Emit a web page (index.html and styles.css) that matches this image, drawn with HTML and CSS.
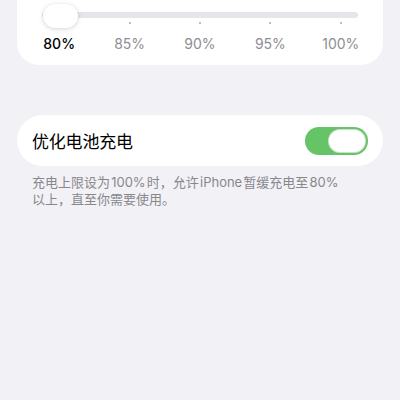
FILE: index.html
```html
<!DOCTYPE html>
<html lang="zh-CN">
<head>
  <meta charset="UTF-8">
  <meta name="viewport" content="width=device-width, initial-scale=1.0">
  <title>电池充电</title>
  <link rel="stylesheet" href="styles.css">
</head>
<body>
  <div class="page">
    <section class="card limit-card">
      <div class="slider">
        <div class="track"></div>
        <div class="thumb"></div>
      </div>
      <div class="stops">
        <div class="stop active"><span class="tick"></span><span class="label">80%</span></div>
        <div class="stop"><span class="tick"></span><span class="label">85%</span></div>
        <div class="stop"><span class="tick"></span><span class="label">90%</span></div>
        <div class="stop"><span class="tick"></span><span class="label">95%</span></div>
        <div class="stop"><span class="tick"></span><span class="label">100%</span></div>
      </div>
    </section>

    <section class="card setting-row">
      <span class="row-title">优化电池充电</span>
      <span class="switch on"><span class="knob"></span></span>
    </section>
    <p class="footnote">充电上限设为&#8202;100%&#8202;时，允许&#8202;iPhone&#8202;暂缓充电至&#8202;80%<br>以上，直至你需要使用。</p>
  </div>
</body>
</html>
```

FILE: styles.css
```css
body {
  font-family: Inter, "Noto Sans CJK SC", sans-serif;
  background-color: #f2f1f6;
  color: #000;
  margin: 0;
  padding: 0;
}
.page {
  display: flex;
  flex-direction: column;
  overflow: hidden;
  height: 400px;
}
.card {
  background-color: #fff;
  margin: 0 17px;
}
.limit-card {
  margin-top: -48px;
  padding: 52px 7px 12px;
  border-radius: 22px;
}
.slider {
  position: relative;
  height: 24px;
  margin: 0 18px;
  display: flex;
  align-items: center;
}
.track {
  flex: 1;
  height: 6px;
  margin-top: -2px;
  border-radius: 3px;
  background-color: #e6e6ea;
}
.thumb {
  position: absolute;
  left: 1px;
  top: 0;
  width: 35px;
  height: 24px;
  border-radius: 12px;
  background-color: #fff;
  box-shadow: 0 1px 5px rgba(0, 0, 0, 0.16), 0 0 1px rgba(0, 0, 0, 0.08);
}
.stops {
  display: grid;
  grid-template-columns: repeat(5, 1fr);
  margin-top: -6px;
}
.stop {
  display: flex;
  flex-direction: column;
  align-items: center;
}
.tick {
  width: 2px;
  height: 2px;
  border-radius: 1px;
  background-color: #a9a9ae;
}
.stop.active .tick {
  visibility: hidden;
}
.label {
  margin-top: 11px;
  font-size: 14px;
  line-height: 18px;
  color: #8e8e93;
}
.stop.active .label {
  color: #000;
  font-weight: 500;
}
.setting-row {
  margin-top: 50px;
  height: 51px;
  border-radius: 26px;
  padding: 0 15px 0 15px;
  display: flex;
  align-items: center;
  justify-content: space-between;
}
.row-title {
  font-size: 17px;
  letter-spacing: -0.2px;
}
.switch {
  width: 63px;
  height: 28px;
  border-radius: 14px;
  background-color: #e6e6ea;
  display: flex;
  align-items: center;
  padding: 0 2px;
  box-sizing: border-box;
}
.switch.on {
  background-color: #64c466;
  justify-content: flex-end;
}
.knob {
  width: 38px;
  height: 24px;
  border-radius: 12px;
  background-color: #fff;
  box-shadow: inset 0 0 0 1px rgba(60, 120, 60, 0.25);
}
.footnote {
  margin: 8px 0 0;
  padding: 0 32px;
  font-size: 13px;
  line-height: 17px;
  color: #88888c;
}
```
